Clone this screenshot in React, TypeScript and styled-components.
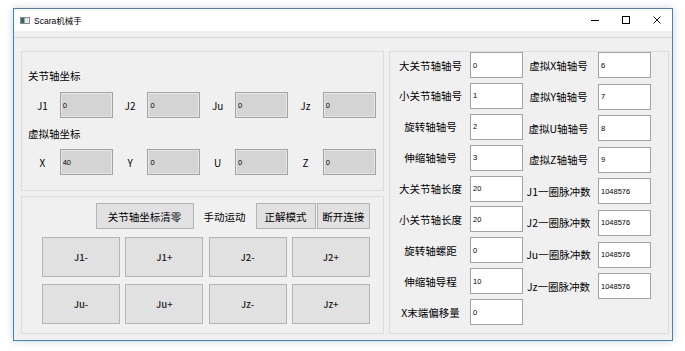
import React from 'react';
import styled, { createGlobalStyle } from 'styled-components';

const Global = createGlobalStyle`
  html, body { margin: 0; padding: 0; background: #ffffff; }
  body { font-family: "Noto Sans CJK SC", "Liberation Sans", sans-serif; color: #000; }
  * { box-sizing: border-box; }
`;

const Page = styled.div`
  width: 685px;
  height: 351px;
  padding: 8px 0 0 13px;
  background: #ffffff;
  overflow: hidden;
`;

const Window = styled.div`
  width: 660px;
  height: 333px;
  border: 1px solid #3a86cf;
  box-shadow: 0 0 8px rgba(0, 0, 0, 0.18);
  display: flex;
  flex-direction: column;
  background: #f0f0f0;
`;

const TitleBar = styled.div`
  height: 22px;
  flex: none;
  background: #ffffff;
  display: flex;
  align-items: center;
`;

const AppIcon = styled.svg`
  margin-left: 6px;
  flex: none;
`;

const Title = styled.span`
  margin-left: 4px;
  font-family: "Liberation Sans", "Noto Sans CJK SC", sans-serif;
  font-size: 8.5px;
  color: #000;
`;

const Controls = styled.div`
  margin-left: auto;
  display: flex;
  height: 100%;
`;

const Ctrl = styled.div`
  width: 31px;
  height: 100%;
  display: flex;
  align-items: center;
  justify-content: center;
`;

const MenuStrip = styled.div`
  height: 7px;
  flex: none;
  background: #f0f0f0;
  border-bottom: 1px solid #dadada;
`;

const Content = styled.div`
  flex: 1;
  display: flex;
  gap: 5px;
  padding: 13px 3px 6px 7px;
`;

const LeftCol = styled.div`
  width: 363px;
  display: flex;
  flex-direction: column;
  gap: 5px;
`;

const Group = styled.div<{ $h: number }>`
  height: ${(p) => p.$h}px;
  border: 1px solid #dcdcdc;
`;

const CoordGroup = styled(Group)`
  display: flex;
  flex-direction: column;
  padding: 17px 0 0 3px;
`;

const SectionLabel = styled.div<{ $mt?: number; $mb: number }>`
  height: 14px;
  line-height: 14px;
  font-size: 10.5px;
  margin-left: 3px;
  margin-top: ${(p) => p.$mt ?? 0}px;
  margin-bottom: ${(p) => p.$mb}px;
  color: #000;
`;

const CoordRow = styled.div`
  display: grid;
  grid-template-columns: repeat(4, 34.7px 53px);
  height: 26px;
  align-items: center;
`;

const AxisLabel = styled.span`
  text-align: center;
  font-size: 10px;
  color: #000;
`;

const Field = styled.input<{ $ro?: boolean }>`
  width: 53px;
  height: 26px;
  margin: 0;
  padding: 0 0 0 2px;
  border: 1px solid #a3a3a3;
  border-radius: 0;
  outline: none;
  background: ${(p) => (p.$ro ? '#d4d4d4' : '#ffffff')};
  box-shadow: ${(p) => (p.$ro ? 'inset 0 0 0 1px #e6e6e6' : 'none')};
  font-family: "Liberation Sans", sans-serif;
  font-size: 7.5px;
  color: #000;
`;

const ControlGroup = styled(Group)`
  display: flex;
  flex-direction: column;
  padding: 6px 13px 0 20px;
  gap: 8px;
`;

const TopBar = styled.div`
  height: 26px;
  display: flex;
  justify-content: flex-end;
  align-items: stretch;
`;

const Btn = styled.button<{ $w?: number; $ml?: number }>`
  ${(p) => (p.$w ? `width: ${p.$w}px;` : '')}
  margin: 0 0 0 ${(p) => p.$ml ?? 0}px;
  padding: 0;
  background: #e1e1e1;
  border: 1px solid #b4b4b4;
  border-radius: 0;
  font-family: "Noto Sans CJK SC", "Liberation Sans", sans-serif;
  font-size: 10.5px;
  color: #000;
`;

const ModeLabel = styled.span`
  width: 62px;
  display: flex;
  align-items: center;
  justify-content: center;
  font-size: 10.5px;
  color: #000;
`;

const JogGrid = styled.div`
  display: grid;
  grid-template-columns: repeat(4, 78px);
  grid-auto-rows: 40px;
  column-gap: 5.3px;
  row-gap: 7px;
`;

const JogBtn = styled(Btn)`
  font-size: 9.5px;
  font-weight: 500;
  color: #222;
`;

const ParamGroup = styled(Group)`
  width: 280px;
  display: flex;
  align-items: flex-start;
  padding: 0 0 0 7px;
  gap: 2px;
`;

const ParamCol = styled.div<{ $gap: number }>`
  display: flex;
  flex-direction: column;
  gap: ${(p) => p.$gap}px;
`;

const ParamRow = styled.div`
  display: flex;
  align-items: center;
  gap: 6px;
  height: 26px;
`;

const ParamLabel = styled.span`
  width: 67px;
  text-align: center;
  font-size: 10.5px;
  color: #000;
  white-space: nowrap;
`;

const joint = [
  ['J1', '0'],
  ['J2', '0'],
  ['Ju', '0'],
  ['Jz', '0'],
];
const virt = [
  ['X', '40'],
  ['Y', '0'],
  ['U', '0'],
  ['Z', '0'],
];

const col1 = [
  ['大关节轴轴号', '0'],
  ['小关节轴轴号', '1'],
  ['旋转轴轴号', '2'],
  ['伸缩轴轴号', '3'],
  ['大关节轴长度', '20'],
  ['小关节轴长度', '20'],
  ['旋转轴螺距', '0'],
  ['伸缩轴导程', '10'],
  ['X末端偏移量', '0'],
];
const col2 = [
  ['虚拟X轴轴号', '6'],
  ['虚拟Y轴轴号', '7'],
  ['虚拟U轴轴号', '8'],
  ['虚拟Z轴轴号', '9'],
  ['J1一圈脉冲数', '1048576'],
  ['J2一圈脉冲数', '1048576'],
  ['Ju一圈脉冲数', '1048576'],
  ['Jz一圈脉冲数', '1048576'],
];

const jogs = ['J1-', 'J1+', 'J2-', 'J2+', 'Ju-', 'Ju+', 'Jz-', 'Jz+'];

export default function App() {
  return (
    <>
      <Global />
      <Page>
        <Window>
          <TitleBar>
            <AppIcon width="10" height="7" viewBox="0 0 10 7">
              <rect x="0.5" y="0.5" width="9" height="6" fill="#e8e8e8" stroke="#8a8a8a" />
              <rect x="1" y="1" width="3.5" height="5" fill="#2f6f6a" />
            </AppIcon>
            <Title>Scara机械手</Title>
            <Controls>
              <Ctrl>
                <svg width="8" height="8" viewBox="0 0 8 8">
                  <line x1="0" y1="4.5" x2="8" y2="4.5" stroke="#000" strokeWidth="1" />
                </svg>
              </Ctrl>
              <Ctrl>
                <svg width="8" height="8" viewBox="0 0 8 8">
                  <rect x="0.5" y="0.5" width="7" height="7" fill="none" stroke="#000" strokeWidth="1" />
                </svg>
              </Ctrl>
              <Ctrl>
                <svg width="8" height="8" viewBox="0 0 8 8">
                  <path d="M0.5 0.5 L7.5 7.5 M7.5 0.5 L0.5 7.5" stroke="#000" strokeWidth="0.9" />
                </svg>
              </Ctrl>
            </Controls>
          </TitleBar>
          <MenuStrip />
          <Content>
            <LeftCol>
              <CoordGroup $h={140}>
                <SectionLabel $mb={9}>关节轴坐标</SectionLabel>
                <CoordRow>
                  {joint.map(([l, v]) => (
                    <React.Fragment key={l}>
                      <AxisLabel>{l}</AxisLabel>
                      <Field $ro readOnly value={v} />
                    </React.Fragment>
                  ))}
                </CoordRow>
                <SectionLabel $mt={9} $mb={8}>虚拟轴坐标</SectionLabel>
                <CoordRow>
                  {virt.map(([l, v]) => (
                    <React.Fragment key={l}>
                      <AxisLabel>{l}</AxisLabel>
                      <Field $ro readOnly value={v} />
                    </React.Fragment>
                  ))}
                </CoordRow>
              </CoordGroup>
              <ControlGroup $h={138}>
                <TopBar>
                  <Btn $w={98}>关节轴坐标清零</Btn>
                  <ModeLabel>手动运动</ModeLabel>
                  <Btn $w={60}>正解模式</Btn>
                  <Btn $w={53.4} $ml={1}>断开连接</Btn>
                </TopBar>
                <JogGrid>
                  {jogs.map((j) => (
                    <JogBtn key={j}>{j}</JogBtn>
                  ))}
                </JogGrid>
              </ControlGroup>
            </LeftCol>
            <ParamGroup $h={283}>
              <ParamCol $gap={4.9}>
                {col1.map(([l, v]) => (
                  <ParamRow key={l}>
                    <ParamLabel>{l}</ParamLabel>
                    <Field readOnly value={v} />
                  </ParamRow>
                ))}
              </ParamCol>
              <ParamCol $gap={5.6}>
                {col2.map(([l, v]) => (
                  <ParamRow key={l}>
                    <ParamLabel>{l}</ParamLabel>
                    <Field readOnly value={v} />
                  </ParamRow>
                ))}
              </ParamCol>
            </ParamGroup>
          </Content>
        </Window>
      </Page>
    </>
  );
}
